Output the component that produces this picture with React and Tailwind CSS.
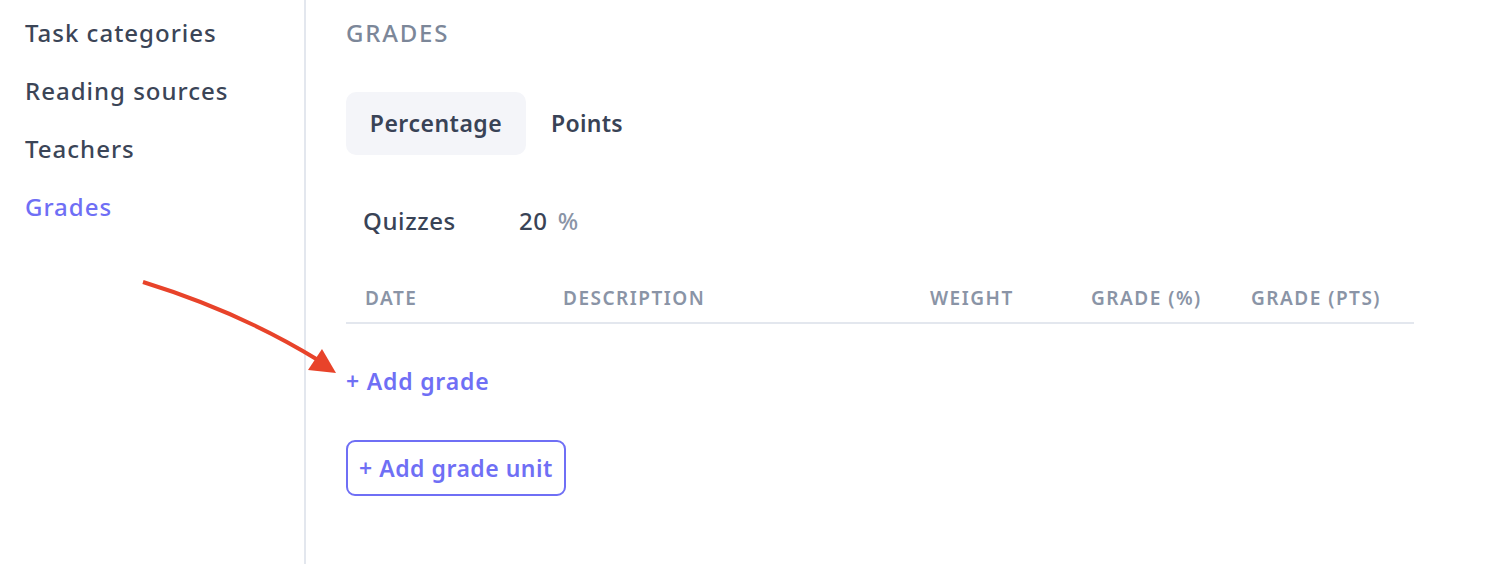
import React, { useState } from "react";

const NAV = ["Task categories", "Reading sources", "Teachers", "Grades"];

const COLUMNS = [
  { label: "Date", width: "w-[198px]" },
  { label: "Description", width: "w-[367px]" },
  { label: "Weight", width: "w-[161px]" },
  { label: "Grade (%)", width: "w-[160px]" },
  { label: "Grade (pts)", width: "flex-1" },
];

export default function App() {
  const [mode, setMode] = useState("percentage");

  return (
    <div
      className="relative flex h-[564px] w-full bg-white text-[#394356]"
      style={{ fontFamily: "'Noto Sans', 'Open Sans', sans-serif" }}
    >
      {/* Sidebar */}
      <aside className="w-[306px] shrink-0 border-r-2 border-[#e3e7ee] pt-[4px] pl-[25px]">
        {NAV.map((item) => (
          <div
            key={item}
            className={`text-[24px] leading-[58px] font-medium tracking-[1px] ${
              item === "Grades" ? "text-[#6f6ff5]" : "text-[#3b4557]"
            }`}
          >
            {item}
          </div>
        ))}
      </aside>

      {/* Main */}
      <main className="flex-1 pl-[40px] pt-[19px]">
        <h2 className="text-[24px] leading-[28px] font-medium uppercase tracking-[1.8px] text-[#7c8799]">
          Grades
        </h2>

        {/* Tabs */}
        <div className="mt-[45px] flex h-[63px]">
          <button
            onClick={() => setMode("percentage")}
            className={`w-[180px] rounded-[10px] text-[23px] font-semibold tracking-[0.5px] text-[#394356] ${
              mode === "percentage" ? "bg-[#f4f5f9]" : ""
            }`}
          >
            Percentage
          </button>
          <button
            onClick={() => setMode("points")}
            className={`rounded-[10px] px-[25px] text-[23px] font-semibold tracking-[0.3px] text-[#394356] ${
              mode === "points" ? "bg-[#f4f5f9]" : ""
            }`}
          >
            Points
          </button>
        </div>

        {/* Unit row */}
        <div className="mt-[52px] flex h-[28px] items-center pl-[17px] text-[24px] font-medium tracking-[0.6px]">
          <span className="w-[156px] text-[#394356]">Quizzes</span>
          <span className="text-[#394356]">20</span>
          <span className="ml-[10px] text-[#8a94a6]">%</span>
        </div>

        {/* Table header */}
        <div className="mt-[39px] flex h-[50px] w-[1068px] items-center border-b-2 border-[#e3e7ee] pl-[19px] text-[19px] font-semibold uppercase tracking-[1.5px] text-[#8a94a6]">
          {COLUMNS.map((c) => (
            <div key={c.label} className={c.width}>
              {c.label}
            </div>
          ))}
        </div>

        <button className="mt-[43px] block h-[28px] text-[23px] font-semibold leading-[28px] tracking-[0.8px] text-[#6f6ff5]">
          + Add grade
        </button>

        <button className="mt-[45px] block h-[56px] w-[220px] rounded-[9px] border-2 border-[#6f6ff5] text-[23px] font-semibold tracking-[0.5px] text-[#6f6ff5]">
          + Add grade unit
        </button>
      </main>

      {/* Annotation arrow */}
      <svg
        className="pointer-events-none absolute left-0 top-0"
        width="1500"
        height="564"
        viewBox="0 0 1500 564"
      >
        <path
          d="M143 282 Q 240 312 318 360"
          fill="none"
          stroke="#e8432a"
          strokeWidth="4"
          strokeLinecap="butt"
        />
        <polygon points="322,349 336,373 308,370" fill="#e8432a" />
      </svg>
    </div>
  );
}
